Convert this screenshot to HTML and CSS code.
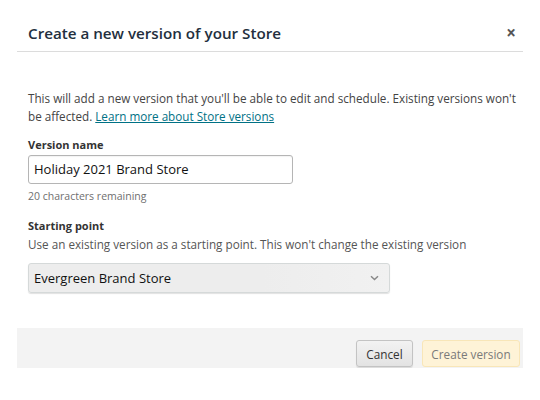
FILE: index.html
```html
<!DOCTYPE html>
<html>
<head>
<meta charset="utf-8">
<link rel="stylesheet" href="styles.css">
</head>
<body>
<div class="modal">
  <div class="header">
    <h1 class="title">Create a new version of your Store</h1>
    <span class="close">×</span>
  </div>
  <div class="body">
    <p class="intro">This will add a new version that you'll be able to edit and schedule. Existing versions won't be affected. <a href="#" class="link">Learn more about Store versions</a></p>
    <div class="field">
      <div class="label">Version name</div>
      <div class="input">Holiday 2021 Brand Store</div>
      <div class="hint">20 characters remaining</div>
    </div>
    <div class="field">
      <div class="label">Starting point</div>
      <div class="desc">Use an existing version as a starting point. This won't change the existing version</div>
      <div class="select">
        <span>Evergreen Brand Store</span>
        <svg class="chev" width="9" height="6" viewBox="0 0 9 6"><path d="M1 1.2 L4.5 4.5 L8 1.2" fill="none" stroke="#888" stroke-width="1.5"/></svg>
      </div>
    </div>
  </div>
  <div class="footer">
    <button class="btn cancel">Cancel</button>
    <button class="btn primary">Create version</button>
  </div>
</div>
</body>
</html>
```

FILE: styles.css
```css
* {
  box-sizing: border-box;
}
html, body {
  margin: 0;
  padding: 0;
  background: #fff;
}
body {
  font-family: "Open Sans", "Liberation Sans", sans-serif;
  color: #333;
}
.modal {
  width: 506px;
  margin-left: 17px;
  padding-top: 14px;
}
.header {
  display: flex;
  align-items: center;
  justify-content: space-between;
  height: 38px;
  border-bottom: 1px solid #dcdcdc;
  padding: 0 7px 0 11px;
}
.title {
  margin: 0;
  font-size: 15.2px;
  font-weight: 600;
  color: #232f3e;
}
.close {
  font-size: 17px;
  font-weight: 700;
  color: #555;
  line-height: 1;
}
.body {
  padding: 37px 0 0 11px;
}
.intro {
  margin: 0;
  font-size: 11.7px;
  line-height: 18px;
  color: #444;
  width: 500px;
}
.link {
  color: #007185;
  text-decoration: underline;
}
.field {
  margin-top: 12px;
}
.field + .field {
  margin-top: 15px;
}
.label {
  font-size: 11px;
  font-weight: 700;
  color: #333;
  line-height: 16px;
}
.input {
  margin-top: 2px;
  width: 265px;
  height: 29px;
  border: 1px solid #b5b5b5;
  border-radius: 3px;
  padding-left: 5px;
  font-size: 13px;
  line-height: 27px;
  color: #111;
  box-shadow: inset 0 1px 1px rgba(0,0,0,0.05);
}
.hint {
  margin-top: 5px;
  font-size: 10.5px;
  color: #6f6f6f;
  line-height: 14px;
}
.desc {
  margin-top: 2px;
  font-size: 11.7px;
  color: #555;
  line-height: 17px;
}
.select {
  margin-top: 10px;
  width: 362px;
  height: 30px;
  border: 1px solid #d5d9d9;
  border-radius: 3px;
  padding: 0 10px 0 5px;
  display: flex;
  align-items: center;
  justify-content: space-between;
  background: linear-gradient(to right, #ededed 0%, #ededed 65%, #f1f1f1 100%);
  box-shadow: 0 1px 1px rgba(0,0,0,0.12);
  font-size: 13px;
  color: #111;
}
.footer {
  margin-top: 35px;
  height: 40px;
  background: #f3f3f3;
  display: flex;
  justify-content: flex-end;
  align-items: flex-end;
  gap: 9px;
  padding: 0 3px 1px 0;
}
.btn {
  font-family: "Open Sans", "Liberation Sans", sans-serif;
  font-size: 11.75px;
  height: 27px;
  border-radius: 3px;
  margin: 0;
  padding: 0;
}
.cancel {
  width: 57px;
  background: linear-gradient(#f2f2f2, #e3e3e3);
  border: 1px solid #c3c3c3;
  color: #333;
  box-shadow: 0 1px 1px rgba(0,0,0,0.1);
}
.primary {
  width: 98px;
  background: #fef3d7;
  border: 1px solid #f8e6b8;
  color: #7a7a7a;
}
```
